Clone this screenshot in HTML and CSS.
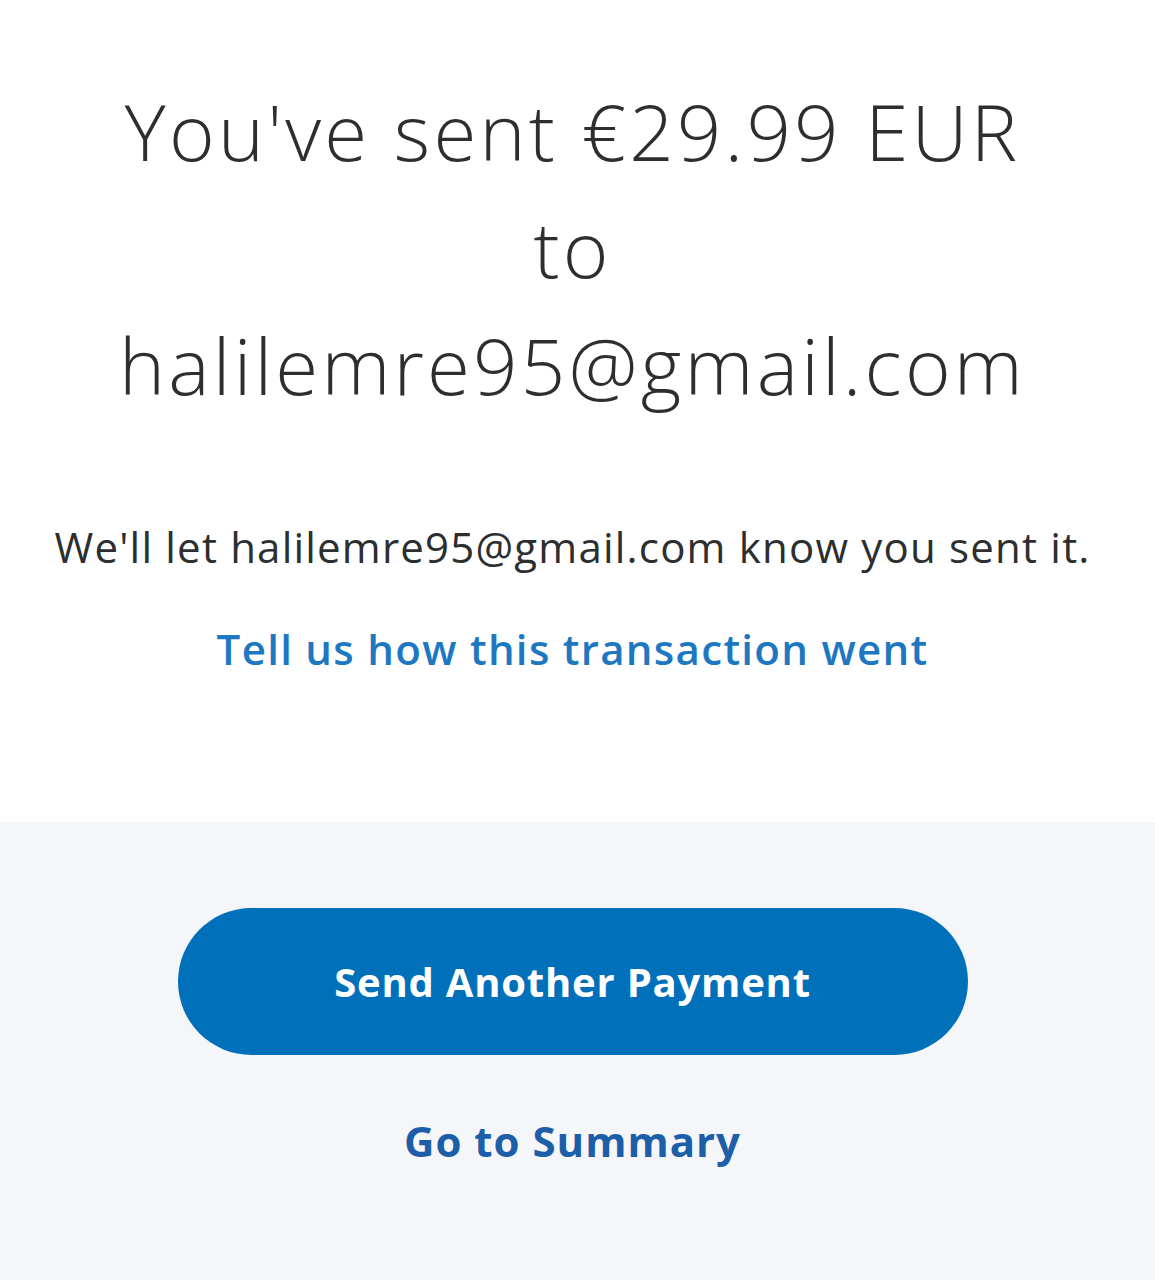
FILE: index.html
```html
<!DOCTYPE html>
<html lang="en">
<head>
<meta charset="utf-8">
<title>Payment sent</title>
<link rel="stylesheet" href="styles.css">
</head>
<body>
<main class="page">
  <section class="confirm">
    <h1 class="headline">You've sent €29.99 EUR<br>to<br>halilemre95@gmail.com</h1>
    <p class="notice">We'll let halilemre95@gmail.com know you sent it.</p>
    <a class="feedback" href="#">Tell us how this transaction went</a>
  </section>
  <section class="actions">
    <a class="primary-btn" href="#">Send Another Payment</a>
    <a class="summary-link" href="#">Go to Summary</a>
  </section>
</main>
</body>
</html>
```

FILE: styles.css
```css
html, body {
  margin: 0;
  padding: 0;
  background: #ffffff;
}
body {
  font-family: "Open Sans", "Noto Sans", sans-serif;
  color: #2c2e2f;
}
.page {
  display: flex;
  flex-direction: column;
  min-height: 1280px;
}
.confirm {
  height: 822px;
  box-sizing: border-box;
  padding: 73px 10px 0 0;
  display: flex;
  flex-direction: column;
  align-items: center;
  background: #ffffff;
}
.headline {
  margin: 0;
  font-weight: 300;
  font-size: 78px;
  line-height: 117px;
  text-align: center;
  letter-spacing: 3.2px;
  color: #2c2e2f;
}
.notice {
  margin: 98px 0 0;
  font-size: 42px;
  line-height: 50px;
  letter-spacing: 1.2px;
  color: #2c2e2f;
}
.feedback {
  margin-top: 52px;
  font-size: 42px;
  font-weight: 600;
  line-height: 50px;
  letter-spacing: 1.3px;
  color: #1d77c1;
  text-decoration: none;
}
.actions {
  flex: 1;
  background: #f5f6fa;
  display: flex;
  flex-direction: column;
  align-items: center;
  padding: 86px 10px 0 0;
}
.primary-btn {
  width: 790px;
  height: 147px;
  border-radius: 74px;
  background: #0070ba;
  color: #ffffff;
  font-size: 40px;
  font-weight: 700;
  letter-spacing: 0.8px;
  display: flex;
  align-items: center;
  justify-content: center;
  text-decoration: none;
}
.summary-link {
  margin-top: 61px;
  font-size: 42px;
  font-weight: 700;
  line-height: 50px;
  letter-spacing: 1px;
  color: #1c5ea8;
  text-decoration: none;
}
```
